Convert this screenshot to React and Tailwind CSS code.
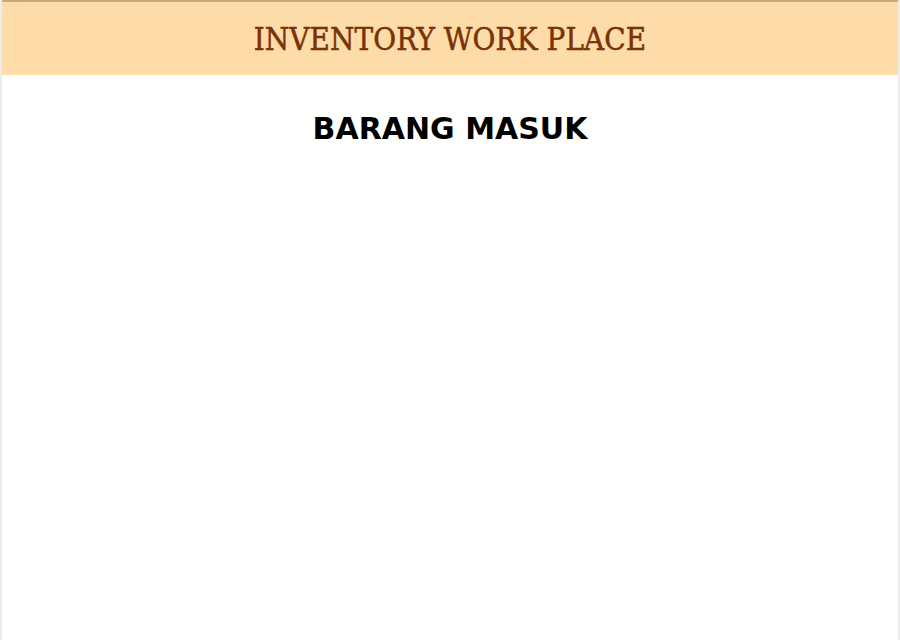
import React from "react";

const App = () => {
  return (
    <div className="min-h-[640px] w-full bg-white border-x-2 border-[#ececec] flex flex-col">
      <header className="h-[75px] bg-[#fddcaa] border-t-2 border-[#c9a87a] flex items-center justify-center">
        <h1
          className="text-[31px] text-[#7a3206] tracking-[0.1px] leading-none pt-[2px] [-webkit-text-stroke:0.5px_#7a3206]"
          style={{ fontFamily: '"DejaVu Serif Condensed", "DejaVu Serif", serif' }}
        >
          INVENTORY WORK PLACE
        </h1>
      </header>
      <main className="flex justify-center pt-[39px]">
        <h2
          className="text-[30px] font-bold text-black leading-none"
          style={{ fontFamily: '"DejaVu Sans", sans-serif' }}
        >
          BARANG MASUK
        </h2>
      </main>
    </div>
  );
};

export default App;
